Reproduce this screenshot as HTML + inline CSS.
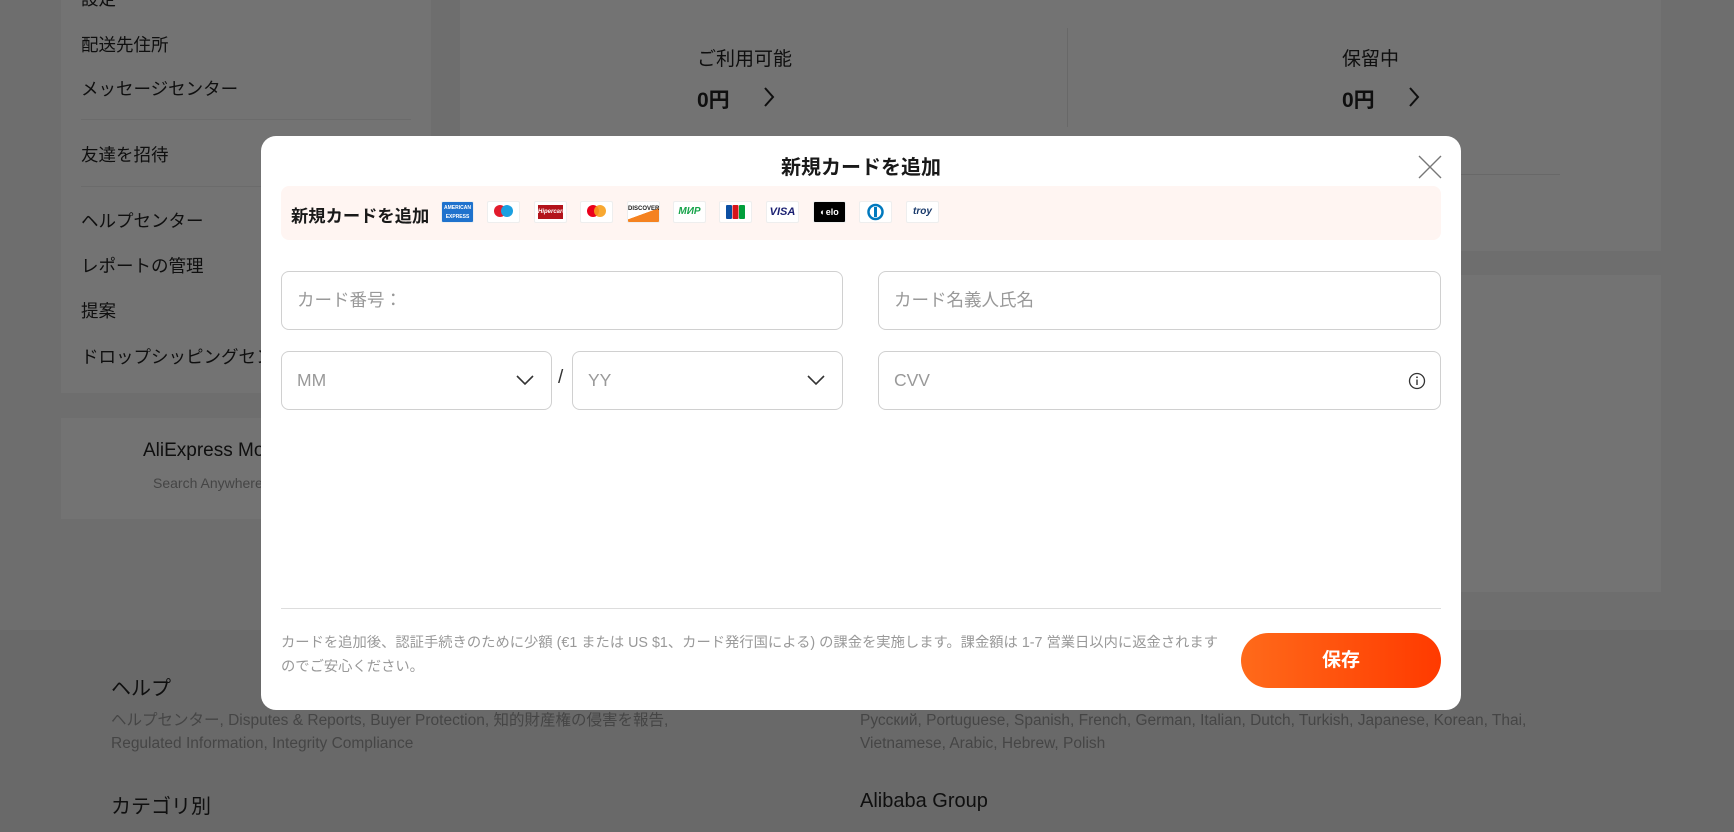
<!DOCTYPE html>
<html><head><meta charset="utf-8"><style>
*{box-sizing:border-box;margin:0;padding:0}
body{width:1734px;height:832px;overflow:hidden;position:relative;background:#f4f4f4;font-family:"Liberation Sans","Noto Sans CJK JP",sans-serif;color:#222}
.abs{position:absolute}
.side{left:61px;top:0;width:370px;height:393px;background:#fff}
.side div{position:absolute;left:20px;font-size:17.5px;color:#222;white-space:nowrap}
.hr{height:1px;background:#eee}
.overlay{left:0;top:0;width:1734px;height:832px;background:rgba(0,0,0,.55)}
.modal{left:261px;top:136px;width:1200px;height:574px;background:#fff;border-radius:15px}
.inp{position:absolute;border:1px solid #d0d0d0;border-radius:8px;height:59px;font-size:17.5px;color:#999;padding-left:15px;line-height:57px}
.card{position:absolute;top:201px;width:33px;height:22px;border:1px solid #eee;border-radius:2px;background:#fff;font-size:8px;font-weight:bold;text-align:center;line-height:20px;overflow:hidden}
.chev{position:absolute;right:16px;top:18px}
</style></head><body>
<div class="abs side">
<div style="top:-14px">設定</div>
<div style="top:32px">配送先住所</div>
<div style="top:76px">メッセージセンター</div>
<div class="hr" style="top:119px;left:20px;width:330px"></div>
<div style="top:142px">友達を招待</div>
<div class="hr" style="top:186px;left:20px;width:330px"></div>
<div style="top:208px">ヘルプセンター</div>
<div style="top:253px">レポートの管理</div>
<div style="top:298px">提案</div>
<div style="top:344px">ドロップシッピングセンター</div>
</div>
<div class="abs" style="left:61px;top:418px;width:370px;height:101px;background:#fff">
<div class="abs" style="left:82px;top:22px;font-size:19px">AliExpress Mobile App</div>
<div class="abs" style="left:92px;top:57px;font-size:14px;color:#999">Search Anywhere, Anytime!</div>
</div>
<div class="abs" style="left:460px;top:0;width:1201px;height:251px;background:#fff">
<div class="abs" style="left:237px;top:44px;font-size:19px">ご利用可能</div>
<div class="abs" style="left:237px;top:84px;font-size:21px;font-weight:bold">0円</div>
<svg class="abs" style="left:302px;top:86px" width="14" height="22" viewBox="0 0 14 22"><path d="M3 2L11 11L3 20" fill="none" stroke="#222" stroke-width="2"/></svg>
<div class="abs" style="left:607px;top:28px;width:1px;height:99px;background:#e6e6e6"></div>
<div class="abs" style="left:882px;top:44px;font-size:19px">保留中</div>
<div class="abs" style="left:882px;top:84px;font-size:21px;font-weight:bold">0円</div>
<svg class="abs" style="left:947px;top:86px" width="14" height="22" viewBox="0 0 14 22"><path d="M3 2L11 11L3 20" fill="none" stroke="#222" stroke-width="2"/></svg>
<div class="abs" style="left:1000px;top:174px;width:100px;height:1px;background:#e6e6e6"></div>
</div>
<div class="abs" style="left:460px;top:275px;width:1201px;height:317px;background:#fff"></div>
<div class="abs" style="left:0;top:630px;width:1734px;height:202px;background:#e9e9e9">
<div class="abs" style="left:111px;top:42px;font-size:20px">ヘルプ</div>
<div class="abs" style="left:111px;top:79px;font-size:15.5px;color:#999;line-height:23px">ヘルプセンター, Disputes &amp; Reports, Buyer Protection, 知的財産権の侵害を報告,<br>Regulated Information, Integrity Compliance</div>
<div class="abs" style="left:111px;top:160px;font-size:20px">カテゴリ別</div>
<div class="abs" style="left:860px;top:79px;font-size:15.5px;color:#999;line-height:23px">Русский, Portuguese, Spanish, French, German, Italian, Dutch, Turkish, Japanese, Korean, Thai,<br>Vietnamese, Arabic, Hebrew, Polish</div>
<div class="abs" style="left:860px;top:160px;font-size:20px">Alibaba Group</div>
</div>
<div class="abs overlay"></div>
<div class="abs modal">
<div class="abs" style="left:0;width:1200px;top:15px;text-align:center;font-size:20px;font-weight:bold;color:#191919">新規カードを追加</div>
<svg class="abs" style="left:1157px;top:19px" width="24" height="24" viewBox="0 0 24 24"><path d="M1 1L23 23M23 1L1 23" stroke="#777" stroke-width="1.4"/></svg>
<div class="abs" style="left:20px;top:50px;width:1160px;height:54px;background:#fff5f2;border-radius:8px"></div>
<div class="abs" style="left:30px;top:66px;font-size:17.3px;font-weight:bold;color:#191919">新規カードを追加</div>
</div>
<div class="card" style="left:441px;background:#1f72cd;color:#fff;font-size:5px;line-height:9px;padding-top:2px">AMERICAN<br>EXPRESS</div>
<div class="card" style="left:487px"><svg width="31" height="20"><circle cx="12" cy="9" r="6" fill="#e21b2c"/><circle cx="19" cy="9" r="6" fill="#1a9fe0"/></svg></div>
<div class="card" style="left:534px"><div style="margin:3px;height:14px;background:#b3131b;color:#fff;font-size:6px;line-height:14px;font-style:italic">Hipercard</div></div>
<div class="card" style="left:580px"><svg width="31" height="20"><circle cx="12" cy="9" r="6" fill="#eb001b"/><circle cx="19" cy="9" r="6" fill="#f79e1b" opacity=".9"/></svg></div>
<div class="card" style="left:627px;font-size:6px;line-height:14px;background:linear-gradient(160deg,#fff 55%,#f58220 56%)">DISCOVER</div>
<div class="card" style="left:673px;color:#16a34a;font-size:10px;font-style:italic">МИР</div>
<div class="card" style="left:719px"><svg width="31" height="20"><rect x="6" y="3" width="6" height="14" rx="1" fill="#0b4ea2"/><rect x="12.5" y="3" width="6" height="14" rx="1" fill="#d7141a"/><rect x="19" y="3" width="6" height="14" rx="1" fill="#009f3c"/></svg></div>
<div class="card" style="left:766px;color:#1a1f71;font-size:11px;font-style:italic">VISA</div>
<div class="card" style="left:813px;background:#000;color:#fff;font-size:9px">◐elo</div>
<div class="card" style="left:859px"><svg width="31" height="20"><circle cx="15.5" cy="10" r="7" fill="none" stroke="#0079be" stroke-width="2.5"/><rect x="14" y="5" width="3" height="10" fill="#0079be"/></svg></div>
<div class="card" style="left:906px;color:#1a3a6b;font-size:10px;font-style:italic">troy</div>
<div class="inp" style="left:281px;top:271px;width:562px">カード番号：</div>
<div class="inp" style="left:878px;top:271px;width:563px">カード名義人氏名</div>
<div class="inp" style="left:281px;top:351px;width:271px">MM<svg class="chev" width="20" height="20" viewBox="0 0 20 20"><path d="M2 6L10 14L18 6" fill="none" stroke="#333" stroke-width="1.6"/></svg></div>
<div class="abs" style="left:558px;top:367px;font-size:19px;color:#333">/</div>
<div class="inp" style="left:572px;top:351px;width:271px">YY<svg class="chev" width="20" height="20" viewBox="0 0 20 20"><path d="M2 6L10 14L18 6" fill="none" stroke="#333" stroke-width="1.6"/></svg></div>
<div class="inp" style="left:878px;top:351px;width:563px">CVV<svg class="abs" style="right:14px;top:20px" width="18" height="18" viewBox="0 0 18 18"><circle cx="9" cy="9" r="7.5" fill="none" stroke="#333" stroke-width="1.3"/><rect x="8.3" y="7.5" width="1.4" height="5.5" fill="#333"/><circle cx="9" cy="5.3" r=".9" fill="#333"/></svg></div>
<div class="abs" style="left:281px;top:608px;width:1160px;height:1px;background:#ddd"></div>
<div class="abs" style="left:281px;top:631px;width:950px;font-size:14.3px;color:#999;line-height:24px">カードを追加後、認証手続きのために少額 (€1 または US $1、カード発行国による) の課金を実施します。課金額は 1-7 営業日以内に返金されますのでご安心ください。</div>
<div class="abs" style="left:1241px;top:633px;width:200px;height:55px;border-radius:28px;background:linear-gradient(90deg,#ff6a1a,#ff3a00);color:#fff;font-size:19px;font-weight:bold;text-align:center;line-height:55px">保存</div>
</body></html>
